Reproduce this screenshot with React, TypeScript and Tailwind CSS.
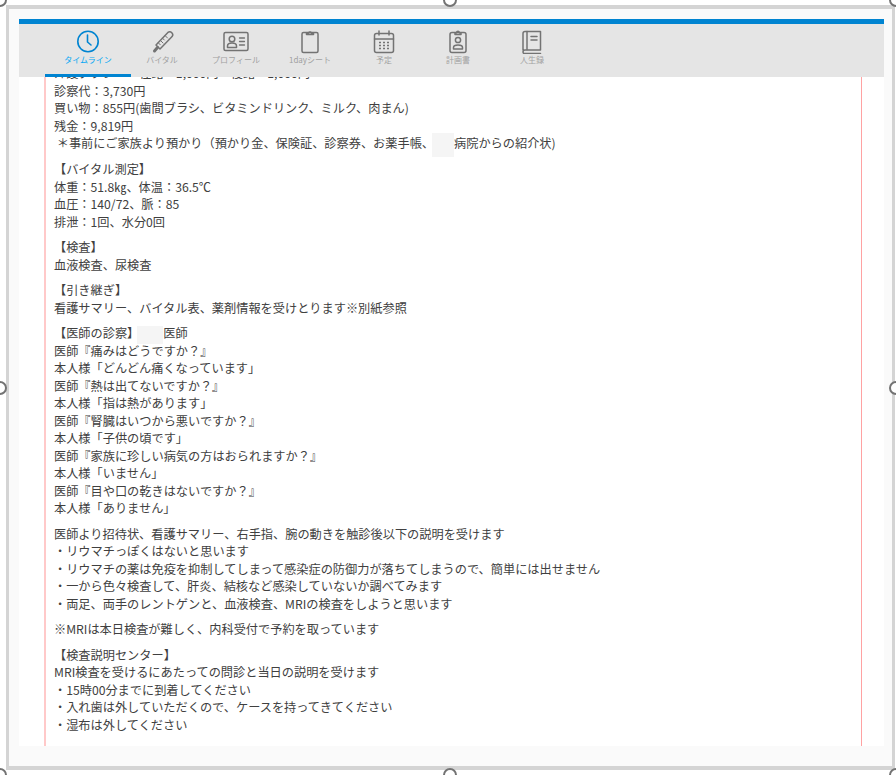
const font = { fontFamily: '"Noto Sans CJK JP", "Noto Sans", sans-serif' };

const I = ({ children }: { children: React.ReactNode }) => (
  <svg width="28" height="28" viewBox="0 0 28 28" fill="none" stroke="currentColor" strokeWidth="1.5" strokeLinecap="round" strokeLinejoin="round">
    <g transform="translate(0 1.5)">{children}</g>
  </svg>
);

const icons = [
  <I key="a">
    <circle cx="14" cy="14" r="10.2" strokeWidth="1.6" />
    <path d="M13.5 7.5v7l3.5 3" strokeWidth="1.6" />
  </I>,
  <I key="b">
    <g transform="translate(0 -1.5)">
      <path d="M8 19 19.900 6.400a3 3 0 0 1 4.200 4.200L12 23z" />
      <path d="M9.500 21.500 6.500 25" strokeWidth="3" />
      <path d="M17 9.500l2.500 2.500M14.500 12.200l1.800 1.800M12.500 14.500l2.500 2.500M10.500 17l1.800 1.800" strokeWidth="1" />
    </g>
  </I>,
  <I key="c">
    <rect x="2" y="5" width="24" height="18" rx="1.5" />
    <circle cx="10" cy="11.5" r="2.8" />
    <path d="M5.500 20v-1.500c0-1.800 2-3 4.500-3s4.500 1.200 4.500 3V20z" />
    <path d="M17.500 10.500h5M17.500 14h5M17.500 17.500h5" strokeWidth="1.300" />
  </I>,
  <I key="d">
    <rect x="6" y="5" width="16" height="20" rx="1.500" />
    <path d="M10.500 7V5.500h2.200a1.400 1.400 0 0 1 2.600 0h2.200V7z" />
  </I>,
  <I key="e">
    <rect x="4.500" y="6" width="19" height="19" rx="2" />
    <path d="M4.500 11.500h19M9 3.500v4M19 3.500v4" />
    <path d="M9 15h2M13 15h2M17 15h2M9 18h2M13 18h2M17 18h2M9 21h2M13 21h2M17 21h2" strokeWidth="1.600" strokeLinecap="butt" />
  </I>,
  <I key="f">
    <rect x="6" y="5" width="16" height="20" rx="2" />
    <path d="M11 7V5.200h1.600a1.400 1.400 0 0 1 2.800 0H17V7z" />
    <circle cx="14" cy="12.500" r="2.600" />
    <path d="M9.500 21.500v-1.500c0-1.500 2-2.500 4.500-2.500s4.500 1 4.500 2.500v1.500z" />
  </I>,
  <I key="g">
    <path d="M5 22.500V6a2 2 0 0 1 2-2h15.500v18.500H7a2 2 0 0 0-2 2 1.500 1.500 0 0 0 2 1.500h15.500" />
    <path d="M9 4v18" />
    <path d="M13 9h6M13 12.500h6" />
  </I>,
];

const labels = ['タイムライン', 'バイタル', 'プロフィール', '1dayシート', '予定', '計画書', '人生録'];

const Blur = () => <span className="-my-1 -ml-0.5 inline-block h-6 w-[22px] bg-neutral-100 align-middle" />;

const blocks: React.ReactNode[][] = [
  [
    '介護タクシー：往路：1,000円・復路：1,000円',
    '診察代：3,730円',
    '買い物：855円(歯間ブラシ、ビタミンドリンク、ミルク、肉まん)',
    '残金：9,819円',
    <> ＊事前にご家族より預かり（預かり金、保険証、診察券、お薬手帳、<Blur />病院からの紹介状)</>,
  ],
  ['【バイタル測定】', '体重：51.8㎏、体温：36.5℃', '血圧：140/72、脈：85', '排泄：1回、水分0回'],
  ['【検査】', '血液検査、尿検査'],
  ['【引き継ぎ】', '看護サマリー、バイタル表、薬剤情報を受けとります※別紙参照'],
  [
    <>【医師の診察】<span className="-my-1 -ml-0.5 inline-block h-[18px] w-[26px] bg-neutral-100 align-middle" />医師</>,
    '医師『痛みはどうですか？』',
    '本人様「どんどん痛くなっています」',
    '医師『熱は出てないですか？』',
    '本人様「指は熱があります」',
    '医師『腎臓はいつから悪いですか？』',
    '本人様「子供の頃です」',
    '医師『家族に珍しい病気の方はおられますか？』',
    '本人様「いません」',
    '医師『目や口の乾きはないですか？』',
    '本人様「ありません」',
  ],
  [
    '医師より招待状、看護サマリー、右手指、腕の動きを触診後以下の説明を受けます',
    '・リウマチっぽくはないと思います',
    '・リウマチの薬は免疫を抑制してしまって感染症の防御力が落ちてしまうので、簡単には出せません',
    '・一から色々検査して、肝炎、結核など感染していないか調べてみます',
    '・両足、両手のレントゲンと、血液検査、MRIの検査をしようと思います',
  ],
  ['※MRIは本日検査が難しく、内科受付で予約を取っています'],
  [
    '【検査説明センター】',
    'MRI検査を受けるにあたっての問診と当日の説明を受けます',
    '・15時00分までに到着してください',
    '・入れ歯は外していただくので、ケースを持ってきてください',
    '・湿布は外してください',
  ],
];

const handles = [
  'top-0 left-0 -translate-x-1/2 -translate-y-1/2',
  'top-0 left-[450px] -translate-x-1/2 -translate-y-1/2',
  'top-0 right-0 translate-x-1/2 -translate-y-1/2',
  'top-[388px] left-0 -translate-x-1/2 -translate-y-1/2',
  'top-[388px] right-0 translate-x-1/2 -translate-y-1/2',
  'bottom-0 left-0 -translate-x-1/2 translate-y-1/2',
  'bottom-0 left-[450px] -translate-x-1/2 translate-y-1/2',
  'bottom-0 right-0 translate-x-1/2 translate-y-1/2',
];

export default function App() {
  return (
    <div className="relative h-[775px] w-[896px] overflow-hidden bg-white" style={font}>
      <div className="absolute top-[5px] right-px bottom-[5px] left-1.5 border-x-[3px] border-y-4 border-neutral-300 bg-neutral-50 pt-2.5 pr-2 pb-5 pl-2.5">
        <div className="flex h-full flex-col bg-white">
          <div className="relative z-10 flex h-[58px] shrink-0 border-t-[5px] border-sky-600 bg-neutral-200 pl-8">
            {labels.map((l, i) => (
              <div
                key={l}
                className={`relative flex w-[74px] flex-col items-center pt-0.5 ${i === 0 ? 'text-sky-600' : 'text-neutral-500'}`}
              >
                {icons[i]}
                <span className={`text-[8px] leading-3 ${i === 0 ? 'text-sky-500' : 'text-neutral-400'}`}>{l}</span>
                {i === 0 && <span className="absolute -inset-x-1.5 bottom-0 h-[3px] bg-sky-600" />}
              </div>
            ))}
          </div>
          <div className="mr-[22px] ml-[25px] flex min-h-0 flex-1 flex-col justify-end overflow-hidden border-r border-l-2 border-r-red-300 border-l-red-200 pb-3 pl-2 text-[12.2px] leading-[17.5px] text-neutral-700">
            {blocks.map((b, i) => (
              <div key={i} className="mb-2 last:mb-0">
                {b.map((line, j) => (
                  <div key={j} className="whitespace-pre">
                    {line}
                  </div>
                ))}
              </div>
            ))}
          </div>
        </div>
      </div>
      {handles.map((h) => (
        <span key={h} className={`absolute size-3.5 rounded-full border-2 border-neutral-500 bg-white ${h}`} />
      ))}
    </div>
  );
}
